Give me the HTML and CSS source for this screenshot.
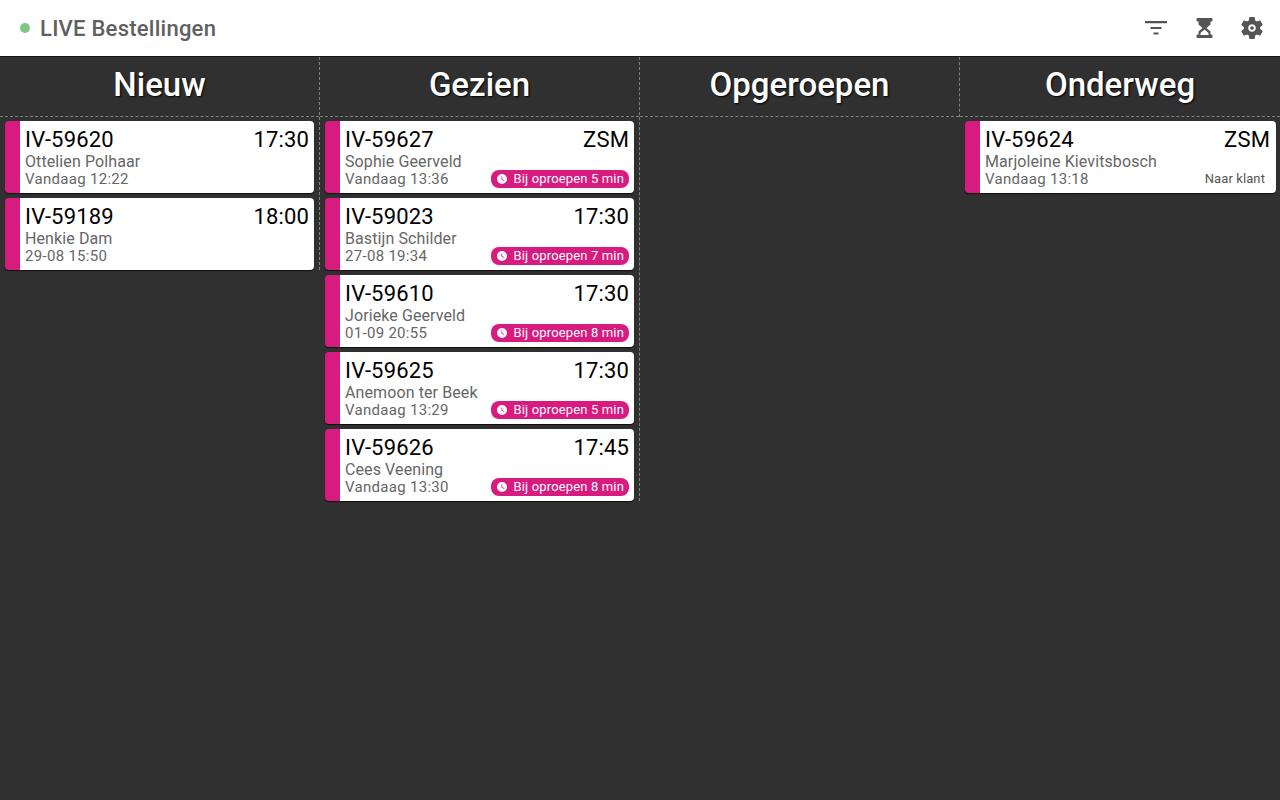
FILE: index.html
```html
<!DOCTYPE html>
<html lang="nl">
<head>
    <meta charset="UTF-8">
    <title>LIVE Bestellingen</title>
    <link rel="stylesheet" href="styles.css">
</head>
<body>
    <header class="topbar">
        <div class="topbar-title">
            <span class="live-dot"></span>
            <span>LIVE Bestellingen</span>
        </div>
        <div class="topbar-icons">
            <svg class="icon" viewBox="0 0 24 24"><path d="M1 5h22v2.200H1zM6.500 11h11v2h-11zM9.500 16.500h5v2h-5z"/></svg>
            <svg class="icon" viewBox="0 0 24 24"><path fill-rule="evenodd" d="M5.500 2h14a1 1 0 0 1 1 1v1.500a1 1 0 0 1-1 1h-1v3l-4 3.500 4 3.500v3h1a1 1 0 0 1 1 1V21a1 1 0 0 1-1 1h-14a1 1 0 0 1-1-1v-1.500a1 1 0 0 1 1-1h1v-3l4-3.500-4-3.500v-3h-1a1 1 0 0 1-1-1V3a1 1 0 0 1 1-1zM12.500 13.500l-4 3.500v2h8v-2z"/></svg>
            <svg class="icon" viewBox="1 1 22 22"><path fill-rule="evenodd" d="M19.430 12.980c.04-.32.07-.64.07-.98s-.03-.66-.07-.98l2.110-1.650c.19-.15.24-.42.12-.64l-2-3.460c-.12-.22-.39-.3-.61-.22l-2.490 1c-.52-.4-1.080-.73-1.690-.98l-.38-2.650C14.460 2.180 14.250 2 14 2h-4c-.25 0-.46.18-.49.42l-.38 2.650c-.61.25-1.170.59-1.690.98l-2.490-1c-.23-.09-.49 0-.61.22l-2 3.460c-.13.22-.07.49.12.64l2.110 1.650c-.04.32-.07.65-.07.98s.03.66.07.98l-2.110 1.650c-.19.15-.24.42-.12.64l2 3.460c.12.22.39.3.61.22l2.490-1c.52.4 1.080.73 1.690.98l.38 2.650c.03.24.24.42.49.42h4c.25 0 .46-.18.49-.42l.38-2.650c.61-.25 1.170-.59 1.690-.98l2.490 1c.23.09.49 0 .61-.22l2-3.460c.12-.22.07-.49-.12-.64l-2.110-1.650zM12 15.500c-1.930 0-3.500-1.570-3.500-3.500s1.570-3.500 3.500-3.500 3.500 1.570 3.500 3.500-1.570 3.500-3.500 3.500z"/><circle cx="12" cy="12" r="1.700"/></svg>
        </div>
    </header>

    <main class="board">
        <section class="column">
            <h2 class="column-title">Nieuw</h2>
            <div class="cards">
                <article class="card">
                    <div class="card-top"><span>IV-59620</span><span>17:30</span></div>
                    <div class="card-name">Ottelien Polhaar</div>
                    <div class="card-bottom"><span>Vandaag 12:22</span></div>
                </article>
                <article class="card">
                    <div class="card-top"><span>IV-59189</span><span>18:00</span></div>
                    <div class="card-name">Henkie Dam</div>
                    <div class="card-bottom"><span>29-08 15:50</span></div>
                </article>
            </div>
        </section>

        <section class="column">
            <h2 class="column-title">Gezien</h2>
            <div class="cards">
                <article class="card">
                    <div class="card-top"><span>IV-59627</span><span>ZSM</span></div>
                    <div class="card-name">Sophie Geerveld</div>
                    <div class="card-bottom"><span>Vandaag 13:36</span>
                        <span class="badge"><svg class="clock" viewBox="0 0 24 24"><path d="M12 2a10 10 0 1 0 0 20 10 10 0 0 0 0-20zm4.200 14.200L11 13V7h1.500v5.200l4.500 2.700-.8 1.300z"/></svg>Bij oproepen 5 min</span></div>
                </article>
                <article class="card">
                    <div class="card-top"><span>IV-59023</span><span>17:30</span></div>
                    <div class="card-name">Bastijn Schilder</div>
                    <div class="card-bottom"><span>27-08 19:34</span>
                        <span class="badge"><svg class="clock" viewBox="0 0 24 24"><path d="M12 2a10 10 0 1 0 0 20 10 10 0 0 0 0-20zm4.200 14.200L11 13V7h1.500v5.200l4.500 2.700-.8 1.300z"/></svg>Bij oproepen 7 min</span></div>
                </article>
                <article class="card">
                    <div class="card-top"><span>IV-59610</span><span>17:30</span></div>
                    <div class="card-name">Jorieke Geerveld</div>
                    <div class="card-bottom"><span>01-09 20:55</span>
                        <span class="badge"><svg class="clock" viewBox="0 0 24 24"><path d="M12 2a10 10 0 1 0 0 20 10 10 0 0 0 0-20zm4.200 14.200L11 13V7h1.500v5.200l4.500 2.700-.8 1.300z"/></svg>Bij oproepen 8 min</span></div>
                </article>
                <article class="card">
                    <div class="card-top"><span>IV-59625</span><span>17:30</span></div>
                    <div class="card-name">Anemoon ter Beek</div>
                    <div class="card-bottom"><span>Vandaag 13:29</span>
                        <span class="badge"><svg class="clock" viewBox="0 0 24 24"><path d="M12 2a10 10 0 1 0 0 20 10 10 0 0 0 0-20zm4.200 14.200L11 13V7h1.500v5.200l4.500 2.700-.8 1.300z"/></svg>Bij oproepen 5 min</span></div>
                </article>
                <article class="card">
                    <div class="card-top"><span>IV-59626</span><span>17:45</span></div>
                    <div class="card-name">Cees Veening</div>
                    <div class="card-bottom"><span>Vandaag 13:30</span>
                        <span class="badge"><svg class="clock" viewBox="0 0 24 24"><path d="M12 2a10 10 0 1 0 0 20 10 10 0 0 0 0-20zm4.200 14.200L11 13V7h1.500v5.200l4.500 2.700-.8 1.300z"/></svg>Bij oproepen 8 min</span></div>
                </article>
            </div>
        </section>

        <section class="column">
            <h2 class="column-title">Opgeroepen</h2>
        </section>

        <section class="column">
            <h2 class="column-title">Onderweg</h2>
            <div class="cards">
                <article class="card">
                    <div class="card-top"><span>IV-59624</span><span>ZSM</span></div>
                    <div class="card-name">Marjoleine Kievitsbosch</div>
                    <div class="card-bottom"><span>Vandaag 13:18</span><span class="card-note">Naar klant</span></div>
                </article>
            </div>
        </section>
    </main>
</body>
</html>
```

FILE: styles.css
```css
* {
    box-sizing: border-box;
}
html, body {
    height: 100%;
}
body {
    margin: 0;
    font-family: Roboto, sans-serif;
    background-color: #303030;
    overflow: hidden;
}
.topbar {
    height: 56px;
    display: flex;
    align-items: center;
    justify-content: space-between;
    padding: 0 16px 0 20px;
    background-color: #fff;
}
.topbar-title {
    display: flex;
    align-items: center;
    gap: 10px;
    font-size: 22px;
    font-weight: 500;
    letter-spacing: .25px;
    color: #606060;
}
.live-dot {
    width: 10px;
    height: 10px;
    border-radius: 50%;
    background-color: #81c784;
}
.topbar-icons {
    display: flex;
    gap: 24px;
}
.icon {
    width: 24px;
    height: 24px;
    fill: #555;
}
.board {
    display: grid;
    grid-template-columns: repeat(4, 320px);
    align-items: start;
    border-top: 1px solid #151515;
}
.column {
    border-right: 1px dashed #808080;
}
.column:last-child {
    border-right: none;
}
.column-title {
    margin: 0;
    height: 60px;
    line-height: 55px;
    text-align: center;
    font-size: 33px;
    font-weight: 500;
    color: #fff;
    text-shadow: 1px 1px 2px #000;
    border-bottom: 1px dashed #808080;
}
.cards {
    display: flex;
    flex-direction: column;
    gap: 5px;
    padding: 4px 5px 0;
}
.column:last-child .cards {
    padding-right: 4px;
}
.column:last-child .card {
    padding-right: 6px;
}
.card {
    height: 72px;
    padding: 6px 5px 0;
    background-color: #fff;
    border-left: 15px solid #d81b7f;
    border-radius: 4px;
    box-shadow: 0 1px 1px rgba(0, 0, 0, .7);
}
.card-top {
    display: flex;
    justify-content: space-between;
    font-size: 22px;
    line-height: 26px;
    letter-spacing: .15px;
    color: #000;
}
.card-name {
    font-size: 16px;
    line-height: 18px;
    letter-spacing: .1px;
    color: #666;
}
.card-bottom {
    display: flex;
    align-items: center;
    justify-content: space-between;
    height: 16px;
    font-size: 15px;
    line-height: 16px;
    letter-spacing: .3px;
    color: #666;
}
.badge {
    display: flex;
    flex-shrink: 0;
    align-items: center;
    gap: 6px;
    height: 18px;
    padding: 0 5px;
    font-size: 13px;
    letter-spacing: .15px;
    color: #fff;
    background-color: #d81b7f;
    border-radius: 8px;
}
.clock {
    width: 12px;
    height: 12px;
    fill: #fff;
}
.card-note {
    padding-right: 5px;
    font-size: 13px;
    letter-spacing: .1px;
    color: #555;
}
```
